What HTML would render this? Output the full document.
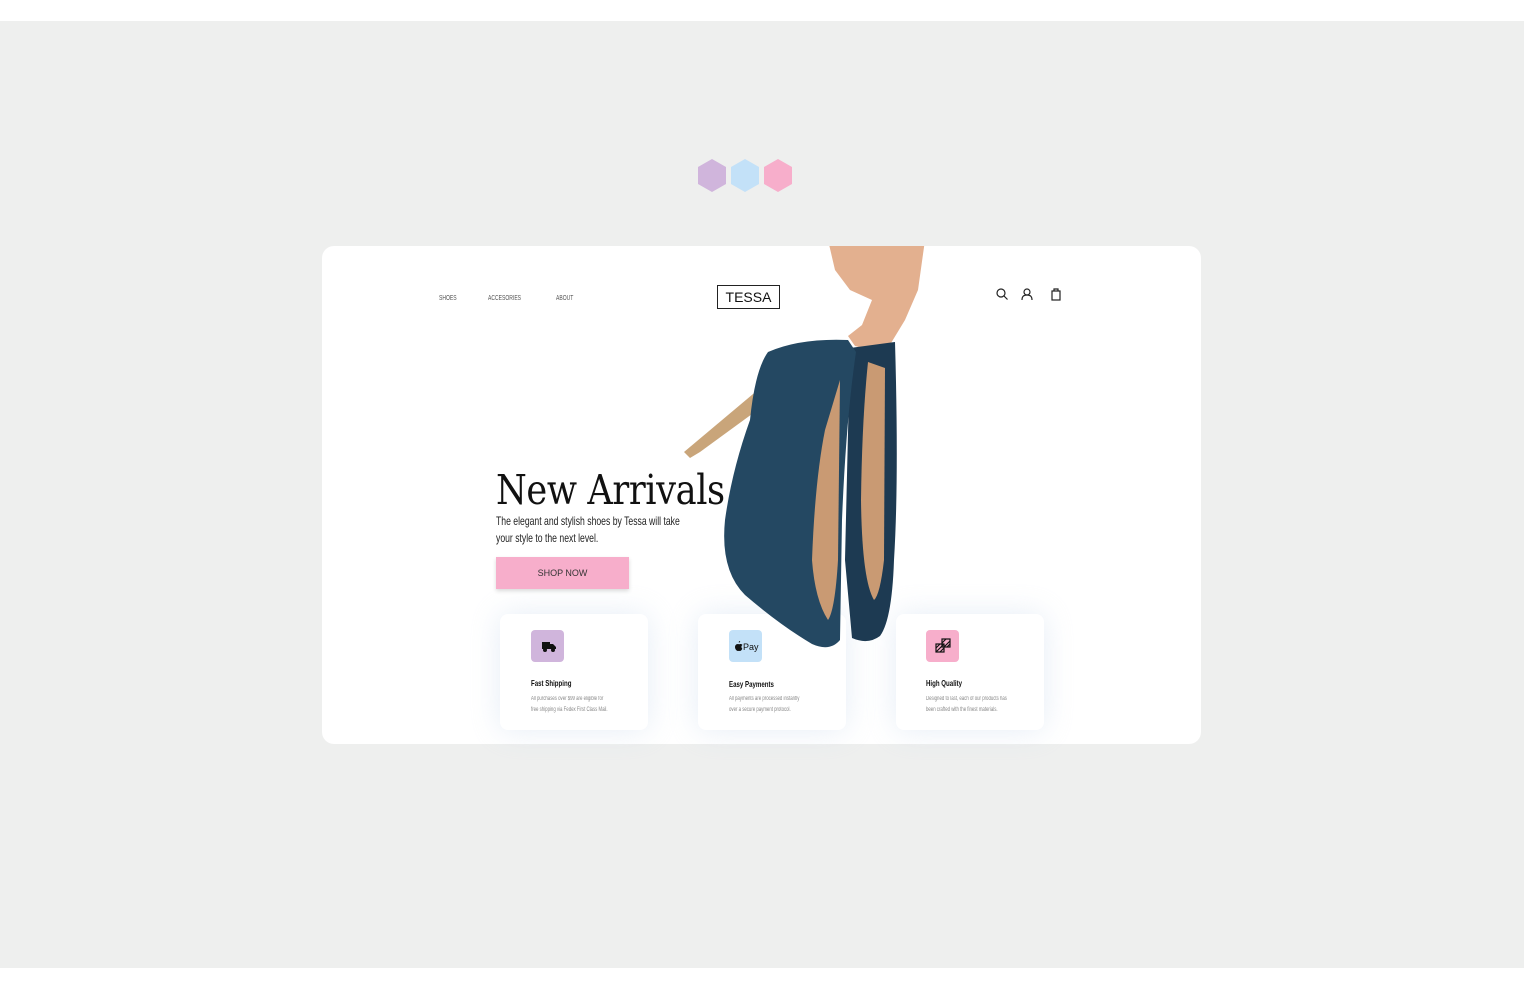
<!DOCTYPE html>
<html><head><style>
body{margin:0;width:1524px;height:986px;background:#fff;font-family:"Liberation Sans",sans-serif;position:relative;overflow:hidden}
.bg{position:absolute;left:0;top:21px;width:1524px;height:947px;background:#eeefee}
.card{position:absolute;left:322px;top:246px;width:879px;height:498px;background:#fff;border-radius:12px;overflow:hidden}
.n{transform-origin:0 0;transform:scaleX(.72);white-space:nowrap;position:absolute}
.nav{font-size:7px;color:#555;top:295px}
.logo{position:absolute;left:717px;top:285px;width:61px;height:22px;border:1.5px solid #222;font-size:14px;text-align:center;line-height:22px;color:#111}
h1{position:absolute;left:496px;top:466px;margin:0;font-family:"DejaVu Serif","Liberation Serif",serif;font-weight:normal;font-size:41px;color:#111;letter-spacing:-0.5px;transform-origin:0 0;transform:scaleX(.86);white-space:nowrap}
.sub{left:496px;top:513px;font-size:12px;line-height:17px;color:#222}
.btn{position:absolute;left:496px;top:557px;width:133px;height:32px;background:#f7aecb;color:#333;font-size:9px;text-align:center;line-height:33px;box-shadow:0 2px 4px rgba(0,0,0,.15)}
.f{position:absolute;top:614px;width:148px;height:116px;background:#fff;border-radius:8px;box-shadow:0 0 30px rgba(200,215,235,.45)}
.ic{position:absolute;left:31px;top:16px;width:33px;height:32px;border-radius:4px}
.ft{left:31px;top:64px;font-size:8.5px;font-weight:bold;color:#111}
.fd{left:31px;top:80px;font-size:6px;line-height:11px;color:#888}
</style></head><body>
<div class="bg"></div>
<svg style="position:absolute;left:696px;top:157px" width="100" height="38">
<polygon points="16,2 30,10 30,27 16,35 2,27 2,10" fill="#d0b5dc"/>
<polygon points="49,2 63,10 63,27 49,35 35,27 35,10" fill="#c3e1f8"/>
<polygon points="82,2 96,10 96,27 82,35 68,27 68,10" fill="#f7aecb"/>
</svg>
<div class="card"></div>
<div class="f" style="left:500px"><div class="ic" style="background:#d0b5dc"><svg width="33" height="32"><rect x="11" y="12" width="8" height="7" fill="#111"/><path d="M19 14h3l3 3v2h-6z" fill="#111"/><circle cx="14" cy="20" r="2" fill="#111"/><circle cx="22" cy="20" r="2" fill="#111"/></svg></div><div class="n ft">Fast Shipping</div><div class="n fd">All purchases over $99 are eligible for<br>free shipping via Fedex First Class Mail.</div></div>
<div class="f" style="left:698px"><div class="ic" style="background:#c3e1f8"><svg width="33" height="32"><path d="M9 14c-2 0-3 1.5-3 3 0 2 1.5 4 3 4 .6 0 1-.3 1-.3s.4.3 1 .3c1 0 2-1.5 2.3-2.5-1-.5-1.3-2.8.2-3.5-.5-.7-1.3-1-2-1-.7 0-1 .3-1.5.3S9.6 14 9 14zM10.5 12.5c.6-.6.7-1.3.6-1.5-.6 0-1.3.5-1.5 1.4.3.1.7 0 .9.1z" fill="#111"/><text x="14" y="20" font-size="9" font-family="Liberation Sans" fill="#111">Pay</text></svg></div><div class="n ft" style="top:65px">Easy Payments</div><div class="n fd">All payments are processed instantly<br>over a secure payment protocol.</div></div>
<div class="f" style="left:896px"><div class="ic" style="left:30px;background:#f7aecb"><svg width="33" height="32" fill="none" stroke="#111" stroke-width="1.2"><rect x="10" y="14" width="8" height="8"/><rect x="16" y="9" width="8" height="8"/><path d="M10 18l4-4M10 22l8-8M14 22l4-4M16 13l4-4M18 17l6-6M21 17l3-3"/></svg></div><div class="n ft" style="left:30px">High Quality</div><div class="n fd" style="left:30px">Designed to last, each of our products has<br>been crafted with the finest materials.</div></div>
<svg style="position:absolute;left:0;top:0" width="1524" height="986">
<defs><clipPath id="c"><rect x="322" y="246" width="879" height="498" rx="12"/></clipPath></defs>
<g clip-path="url(#c)">
<path d="M828 240 L925 240 L918 290 L905 320 L888 348 L870 350 L855 346 L848 336 L862 325 L872 300 L850 290 L835 270 Z" fill="#e3b08f"/>
<path d="M772 378 L778 395 L700 452 L690 458 L684 452 Z" fill="#c9a57a"/>
<path d="M850 348 L895 342 Q899 480 894 560 Q892 620 880 636 Q868 645 852 638 L845 560 Z" fill="#1d3a52"/>
<path d="M768 352 Q800 338 848 340 L856 352 Q846 420 842 520 L840 640 Q830 652 812 644 Q780 625 745 595 Q720 570 725 520 Q732 470 750 420 Q755 370 768 352 Z" fill="#244862"/>
<path d="M840 380 L838 560 Q835 610 828 620 Q815 600 812 560 Q815 480 825 430 Z" fill="#c99a73"/>
<path d="M868 362 L885 368 L884 560 Q880 595 874 600 Q862 580 861 500 Q862 420 868 362 Z" fill="#c99a73"/>
</g>
</svg>
<div class="n nav" style="left:439px">SHOES</div>
<div class="n nav" style="left:488px">ACCESORIES</div>
<div class="n nav" style="left:556px">ABOUT</div>
<div class="logo">TESSA</div>
<svg style="position:absolute;left:995px;top:287px" width="70" height="16" fill="none" stroke="#222" stroke-width="1.2">
<circle cx="6" cy="6" r="4"/><path d="M9 9l3.5 3.5"/>
<circle cx="32" cy="5" r="3"/><path d="M27 13c0-4 2-5 5-5s5 1 5 5"/>
<rect x="57" y="4" width="8" height="9"/><path d="M59 4V2h4v2"/>
</svg>
<h1>New Arrivals</h1>
<div class="n sub">The elegant and stylish shoes by Tessa will take<br>your style to the next level.</div>
<div class="btn">SHOP NOW</div>
</body></html>
